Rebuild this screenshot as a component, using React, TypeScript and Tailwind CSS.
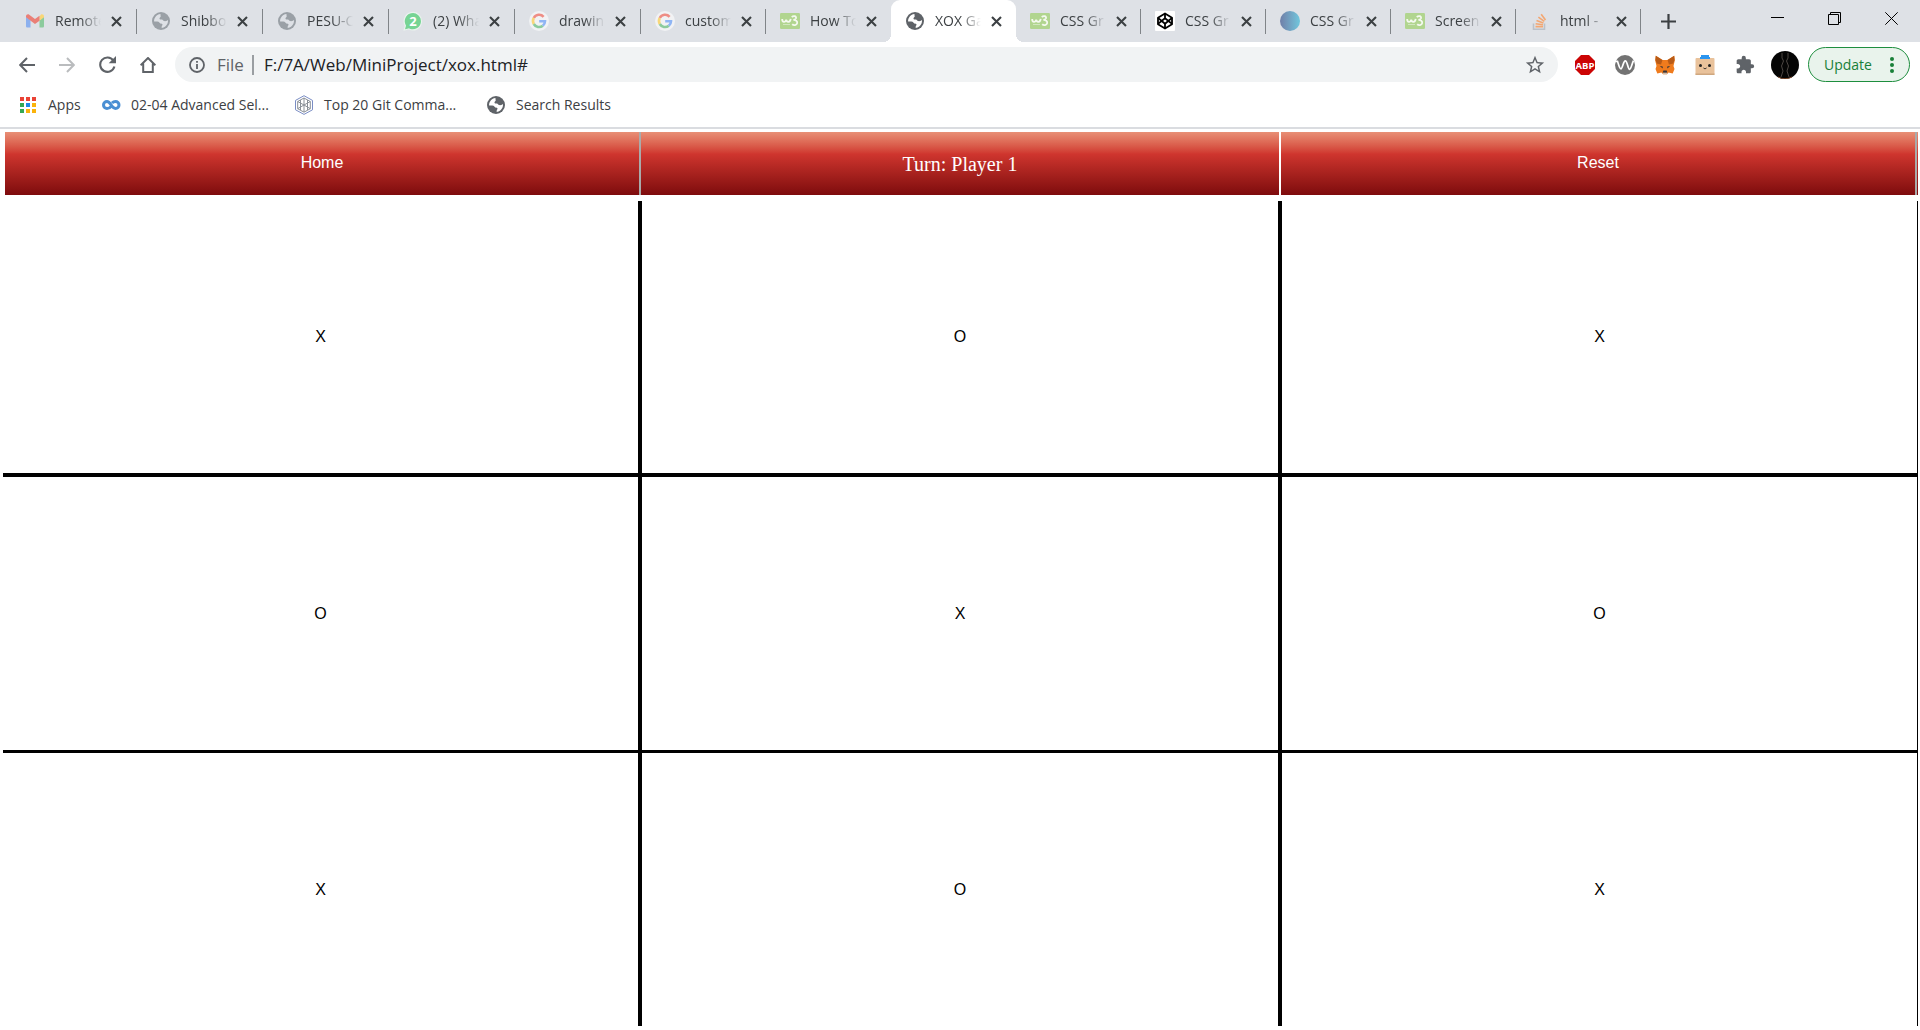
import React from 'react';
import { MdExtension, MdStarBorder } from 'react-icons/md';

function Globe({ muted = false }: { muted?: boolean }) {
  return (
    <svg viewBox="0 0 18 18" className="size-[18px]">
      <circle cx="9" cy="9" r="9" fill={muted ? '#9aa0a6' : '#5f6368'} />
      <path
        d="M8.6 2.1c-2.400.1-4.300 1.300-5.500 3.300-.9 1.500-1.100 2.600-1 4.100 1.700 0 3.200-.1 4.400.3 1.100.4 1 1.400 1.900 1.700.8.3 1.900.1 2.100 1 .2.900-.7 1.200-.8 2-.1.600.2 1.100-.1 1.500 2.800-.2 5-2.200 5.900-4.400.5-1.300.6-2.500.4-3.700-1.200.9-2.300 1.400-3.700 1.200-1.300-.2-1.200-1.300-2.300-1.500-1-.2-2.200.1-2.400-.9-.2-1 1.100-1.200 1.200-2.100.1-1-.6-1.400-.1-2.500z"
        fill={muted ? '#dee1e6' : '#ffffff'}
      />
    </svg>
  );
}

function Gmail() {
  return (
    <svg viewBox="0 0 20 16" className="w-[18px]">
      <path d="M0 3v10.500c0 .8.700 1.500 1.500 1.500H5V7z" fill="#8cb0ee" />
      <path d="M20 3v10.500c0 .8-.7 1.500-1.500 1.500H15V7z" fill="#8ccb9d" />
      <path d="M15 3v4.500l5-3.800V2.500c0-2-2.200-2.800-3.600-1.700z" fill="#f9d676" />
      <path d="M0 2.500C0 .5 2.200-.3 3.600.8L10 5.600 15 1.900v5.600l-5 3.700L0 3.700z" fill="#ea7f77" />
    </svg>
  );
}

function WhatsApp() {
  return (
    <svg viewBox="0 0 20 20" className="size-5">
      <path d="M1.200 19l1.200-4.300A8.700 8.700 0 1 1 6 18z" fill="#76d494" stroke="#eaf3ee" strokeWidth="1.200" />
      <text x="10" y="14.500" textAnchor="middle" fontSize="13" fontWeight="bold" fill="#fff" fontFamily="Open Sans, sans-serif">2</text>
    </svg>
  );
}

function Google() {
  return (
    <svg viewBox="0 0 20 20" className="size-5">
      <circle cx="10" cy="10" r="10" fill="#f1f2f4" />
      <g fill="none" strokeWidth="2.600">
        <path d="M14.600 5.800A6 6 0 0 0 4.800 7" stroke="#ee8d85" />
        <path d="M4.800 7a6 6 0 0 0 0 6" stroke="#f8d779" />
        <path d="M4.800 13a6 6 0 0 0 9 1.700" stroke="#8ccb9d" />
        <path d="M13.800 14.700A6 6 0 0 0 16 10.200H10.200" stroke="#8fb5f4" />
      </g>
    </svg>
  );
}

function W3() {
  return (
    <svg viewBox="0 0 20 16" className="h-4 w-5">
      <rect width="20" height="16" rx="1.200" fill="#b1d58f" />
      <g fill="none" stroke="#f4f9ef">
        <path d="M2.200 6c0 4 3.300 3.600 4 .6.500 3.200 4 3 4.500-.8" strokeWidth="1.800" />
        <path d="M11.800 4.200c1.400-1.600 4.800-1.300 4.200 1-.3 1-1.500 1.500-2.600 1.700 2.300 0 4.200 1 3.800 3.200-.5 2.300-3.600 2.600-5 1" strokeWidth="1.800" />
        <path d="M3 11.500h7" strokeWidth="1" opacity=".5" />
      </g>
    </svg>
  );
}

function Codepen() {
  return (
    <svg viewBox="0 0 20 20" className="size-5">
      <rect width="20" height="20" rx="1" fill="#fff" />
      <g fill="none" stroke="#000" strokeWidth="1.800" strokeLinejoin="round">
        <path d="M10 2.500l7 4.200v6.600l-7 4.200-7-4.200V6.700z" />
        <path d="M10 2.500v4.700l7 5.700M10 7.200L3 12.900M10 17.500v-4.700l7-5.900M10 12.800L3 6.900" />
      </g>
    </svg>
  );
}

function StackOverflow() {
  return (
    <svg viewBox="0 0 20 20" className="size-5" fill="none" strokeWidth="1.600">
      <path d="M3.500 12.500v5.700h11v-5.700" stroke="#bcc1c8" />
      <path d="M5.500 15.600h7.500M5.600 12.700l7.300 1M6.500 9.500l6.900 2.500M8.400 6.200l5.900 4.200M11.200 3.300l4.300 5.800" stroke="#f3a772" />
    </svg>
  );
}

function Cross() {
  return (
    <svg viewBox="0 0 11 11" className="size-[11px]" stroke="#3c4043" strokeWidth="2.100">
      <path d="M1 1l9 9M10 1l-9 9" />
    </svg>
  );
}

type TabInfo = { title: string; icon: React.ReactNode; wide?: boolean; active?: boolean; noLine?: boolean };

const tabs: TabInfo[] = [
  { title: 'Remote', icon: <Gmail />, wide: true },
  { title: 'Shibbo', icon: <Globe muted />, wide: true },
  { title: 'PESU-C', icon: <Globe muted />, wide: true },
  { title: '(2) Wha', icon: <WhatsApp />, wide: true },
  { title: 'drawin', icon: <Google />, wide: true },
  { title: 'custom', icon: <Google /> },
  { title: 'How To', icon: <W3 />, noLine: true },
  { title: 'XOX Ga', icon: <Globe />, active: true },
  { title: 'CSS Gr', icon: <W3 /> },
  { title: 'CSS Gr', icon: <Codepen /> },
  { title: 'CSS Gr', icon: <span className="size-5 rounded-full bg-linear-to-r from-[#6f7fa8] to-[#6fc7dd]" /> },
  { title: 'Screen', icon: <W3 /> },
  { title: 'html -', icon: <StackOverflow /> },
];

function Tab({ title, icon, wide, active, noLine }: TabInfo) {
  return (
    <div
      className={`relative flex h-full items-center pl-3.5 ${wide ? 'w-[126px]' : 'w-[125px]'} ${
        active ? 'rounded-t-[9px] bg-white' : ''
      }`}
    >
      {active && (
        <>
          <span className="absolute bottom-0 -left-2 size-2 bg-[radial-gradient(circle_at_0_0,transparent_8px,white_8px)]" />
          <span className="absolute -right-2 bottom-0 size-2 bg-[radial-gradient(circle_at_100%_0,transparent_8px,white_8px)]" />
        </>
      )}
      <span className="flex w-5 shrink-0 items-center justify-center">{icon}</span>
      <span className="ml-2.5 w-[46px] text-sm leading-5 whitespace-nowrap text-[#3c4043] [mask-image:linear-gradient(to_right,black_55%,transparent)]">
        {title}
      </span>
      <button aria-label={`Close ${title}`} className="ml-2.5">
        <Cross />
      </button>
      {!active && !noLine && <span className="absolute top-[9px] right-0 h-[25px] w-px bg-[#808488]" />}
    </div>
  );
}

function TabStrip() {
  return (
    <header className="flex h-[42px] items-center bg-[#dee1e6] pl-[11px]">
      <nav className="flex h-full shrink-0">
        {tabs.map((t, i) => (
          <Tab key={i} {...t} />
        ))}
      </nav>
      <button aria-label="New tab" className="ml-5">
        <svg viewBox="0 0 15 15" className="size-[15px]" stroke="#3c4043" strokeWidth="2.200">
          <path d="M7.500 0v15M0 7.500h15" />
        </svg>
      </button>
      <div className="mr-[22px] mb-1.5 ml-auto flex items-center gap-11">
        <button aria-label="Minimize">
          <svg viewBox="0 0 13 13" className="size-[13px]" stroke="#000">
            <path d="M0 5.500h13" />
          </svg>
        </button>
        <button aria-label="Restore">
          <svg viewBox="0 0 13 13" className="size-[13px]" stroke="#000" fill="none">
            <path d="M.5 2.500h10v10H.5zM2.500 2.500v-2h10v10h-2" />
          </svg>
        </button>
        <button aria-label="Close window">
          <svg viewBox="0 0 13 13" className="size-[13px]" stroke="#000">
            <path d="M.3.300l12.400 12.400M12.700.300L.3 12.700" />
          </svg>
        </button>
      </div>
    </header>
  );
}

function Toolbar() {
  return (
    <div className="flex h-[45px] items-center bg-white pr-2.5 pl-[19px]">
      <div className="flex w-[156px] shrink-0 items-center gap-6 text-[#5f6368]">
        <button aria-label="Back">
          <svg viewBox="0 0 16 16" className="size-4" fill="none" stroke="currentColor" strokeWidth="2">
            <path d="M16 8H1.500M8 1L1.200 8 8 15" />
          </svg>
        </button>
        <button aria-label="Forward" className="text-[#babcbe]">
          <svg viewBox="0 0 16 16" className="size-4" fill="none" stroke="currentColor" strokeWidth="2">
            <path d="M0 8h14.500M8 1l6.800 7L8 15" />
          </svg>
        </button>
        <button aria-label="Reload">
          <svg viewBox="0 0 17 17" className="size-[17px]" fill="none" stroke="currentColor" strokeWidth="2.100">
            <path d="M14.300 4.500A7.200 7.200 0 1 0 15.400 10.500" />
            <path d="M17 0v7.200H9.700z" fill="currentColor" stroke="none" />
          </svg>
        </button>
        <button aria-label="Home page">
          <svg viewBox="0 0 16 16" className="size-4" fill="none" stroke="currentColor" strokeWidth="2">
            <path d="M.6 8.200L8 1l7.400 7.200M3.200 6.500V15h9.600V6.500" />
          </svg>
        </button>
      </div>
      <div className="flex h-[35px] grow items-center rounded-full bg-[#f1f3f4] pr-3 pl-3.5">
        <svg viewBox="0 0 16 16" className="size-4 shrink-0" fill="none" stroke="#5f6368" strokeWidth="1.800">
          <circle cx="8" cy="8" r="7" />
          <path d="M8 7v5M8 4v1.800" />
        </svg>
        <span className="ml-3 text-[17px] leading-6 text-[#5f6368]">File</span>
        <span className="mr-2.5 ml-2 h-5 w-0.5 bg-[#9a9ea2]" />
        <input
          aria-label="Address"
          defaultValue="F:/7A/Web/MiniProject/xox.html#"
          className="grow bg-transparent text-[17px] leading-6 text-[#202124] outline-none"
        />
        <button aria-label="Bookmark this page">
          <MdStarBorder className="size-[22px] text-[#5f6368]" />
        </button>
      </div>
      <div className="ml-[17px] flex shrink-0 items-center gap-5">
        <button aria-label="AdBlock Plus">
          <svg viewBox="0 0 20 20" className="size-5">
            <path d="M6 0h8l6 6v8l-6 6H6l-6-6V6z" fill="#cc0404" />
            <text x="10" y="13.500" textAnchor="middle" fontSize="9.500" fontWeight="bold" fill="#fff" fontFamily="Open Sans, sans-serif">ABP</text>
          </svg>
        </button>
        <button aria-label="Wappalyzer">
          <svg viewBox="0 0 20 20" className="size-5">
            <circle cx="10" cy="10" r="10" fill="#737373" />
            <path d="M0 6.300h2.500c1.500 4.500 2 7.500 3.500 7.500S8.300 5.800 10.300 5.800s2.700 8.500 4.200 8.500S16.800 9 18.500 5.600" fill="none" stroke="#fff" strokeWidth="1.700" />
          </svg>
        </button>
        <button aria-label="MetaMask">
          <svg viewBox="0 0 20 20" className="size-5">
            <path d="M.8.800l6.700 4.200h5L19.200.8l.6 4.700-1.300 5.500 1 3-1.800 4.500-4.200-1L12 19.200H8l-1.500-1.700-4.200 1L.5 14l1-3L.2 5.500z" fill="#ef7b1d" />
            <path d="M.8.800l6.700 4.200L6 9.500l-4.200-1L.4 5z M19.200.8L12.500 5 14 9.500l4.200-1L19.600 5z" fill="#b95b16" />
            <path d="M4.800 11l2.900.5v2zM15.200 11l-2.900.5v2z" fill="#33343a" />
            <path d="M8.300 15.500h3.400l.6 2.300H7.700z" fill="#33343a" />
            <path d="M7.700 17.800h4.600L12 19.300H8z" fill="#c9bdb1" />
          </svg>
        </button>
        <button aria-label="Cardboard helper">
          <svg viewBox="0 0 20 20" className="size-5">
            <rect x=".5" y="3" width="19" height="17" rx="1" fill="#e9c29b" />
            <path d="M.5 18.500h19V20H.5z" fill="#cfa77f" />
            <path d="M6 0h8v2.500H6zM5 2h10v2H5z" fill="#2b95ef" />
            <circle cx="5.500" cy="10.500" r="1.500" fill="#222" />
            <circle cx="14.500" cy="10.500" r="1.500" fill="#222" />
            <path d="M8.500 13c.8.900 2.200.9 3 0" fill="none" stroke="#222" />
          </svg>
        </button>
        <button aria-label="Extensions">
          <MdExtension className="size-5 text-[#5f6368]" />
        </button>
      </div>
      <button aria-label="Profile" className="ml-4">
        <svg viewBox="0 0 28 28" className="size-7">
          <circle cx="14" cy="14" r="14" fill="#050505" />
          <path d="M11 2v5l1.500 3-2 5 1.500 5-2 6M17 2v5l-1.500 3 2 5-1.500 5 2 6" fill="none" stroke="#5d5650" strokeWidth=".8" />
          <path d="M7 26q7 3.500 14 0" fill="none" stroke="#7d4a2c" />
        </svg>
      </button>
      <button className="ml-[9px] flex h-[35px] w-[102px] shrink-0 items-center justify-between rounded-full border border-[#1e8e3e] bg-[#e9f3ec] px-[15px] text-sm text-[#188038]">
        Update
        <svg viewBox="0 0 4 18" className="h-[18px] w-1" fill="#188038">
          <circle cx="2" cy="3" r="2" />
          <circle cx="2" cy="9" r="2" />
          <circle cx="2" cy="15" r="2" />
        </svg>
      </button>
    </div>
  );
}

function Bookmark({ icon, label, className }: { icon: React.ReactNode; label: string; className: string }) {
  return (
    <a href="#" className={`flex items-center text-sm text-[#3c4043] ${className}`}>
      <span className="flex w-5 shrink-0 justify-center">{icon}</span>
      <span className="ml-2.5 whitespace-nowrap">{label}</span>
    </a>
  );
}

const appColors = ['#ea4335', '#ea4335', '#ea4335', '#34a853', '#1e88e5', '#fbb30b', '#34a853', '#fbb30b', '#fbb30b'];

function BookmarksBar() {
  return (
    <nav className="flex h-[42px] items-center border-b-2 border-[#dadce0] bg-white pb-1 pl-[18px]">
      <Bookmark
        label="Apps"
        className="w-[83px]"
        icon={
          <svg viewBox="0 0 16 16" className="size-4">
            {appColors.map((c, i) => (
              <rect key={i} x={(i % 3) * 6} y={Math.floor(i / 3) * 6} width="4" height="4" fill={c} />
            ))}
          </svg>
        }
      />
      <Bookmark
        label="02-04 Advanced Sel..."
        className="w-[193px]"
        icon={
          <svg viewBox="0 0 20 10" className="h-2.5 w-5" fill="none" stroke="#4a8fd3" strokeWidth="3">
            <path d="M10 6.500C9 8 7.500 8.500 6 8.500a3.500 3.500 0 0 1 0-7c4 0 4 7 8.500 7a3.500 3.500 0 0 0 0-7c-1.500 0-2.500.5-3.500 1.500" />
          </svg>
        }
      />
      <Bookmark
        label="Top 20 Git Comma..."
        className="w-[192px]"
        icon={
          <svg viewBox="0 0 20 20" className="size-5" fill="none">
            <path d="M10 .7l8.500 4.700v9.400L10 19.400l-8.500-4.600V5.400z" stroke="#7a8dc4" />
            <path d="M10 3l6.300 3.500v7.200L10 17.200l-6.300-3.500V6.500zM10 3v14M3.700 6.500L10 10l6.300-3.500M3.700 13.700L10 10l6.300 3.700M6.500 5v10M13.500 5v10" stroke="#8a9097" />
          </svg>
        }
      />
      <Bookmark label="Search Results" className="" icon={<Globe />} />
    </nav>
  );
}

const marks = ['X', 'O', 'X', 'O', 'X', 'O', 'X', 'O', 'X'];
const menuItem = 'flex items-center justify-center text-white';

function Game() {
  return (
    <main className="flex grow flex-col pt-[3px] pr-0.5 pb-1 pl-[3px] font-['Liberation_Sans',sans-serif] text-base">
      <div className="ml-0.5 grid h-[63px] shrink-0 grid-cols-[636fr_640fr_636fr] bg-linear-to-b from-[#e88f76] via-[#cf352e] via-35% to-[#7e0b0d] pr-px">
        <a href="#" className={`${menuItem} border-r-2 border-[#aaaaaa] pb-0.5`}>
          Home
        </a>
        <div className={`${menuItem} border-r-2 border-white font-['Liberation_Serif',serif] text-xl`}>Turn: Player 1</div>
        <a href="#" className={`${menuItem} border-r-2 border-[#aaaaaa] pb-0.5`}>
          Reset
        </a>
      </div>
      <div className="mt-1.5 grid grow grid-cols-[639fr_640fr_636fr] grid-rows-[276fr_276fr_273fr]">
        {marks.map((m, i) => (
          <button
            key={i}
            className={`flex items-center justify-center border-black text-black ${i % 3 < 2 ? 'border-r-4' : 'border-r'} ${
              i < 3 ? 'border-b-4' : i < 6 ? 'border-b-3' : ''
            }`}
          >
            {m}
          </button>
        ))}
      </div>
    </main>
  );
}

export default function App() {
  return (
    <div className="flex min-h-screen flex-col bg-white font-['Open_Sans','Noto_Sans',sans-serif]">
      <TabStrip />
      <Toolbar />
      <BookmarksBar />
      <Game />
    </div>
  );
}
